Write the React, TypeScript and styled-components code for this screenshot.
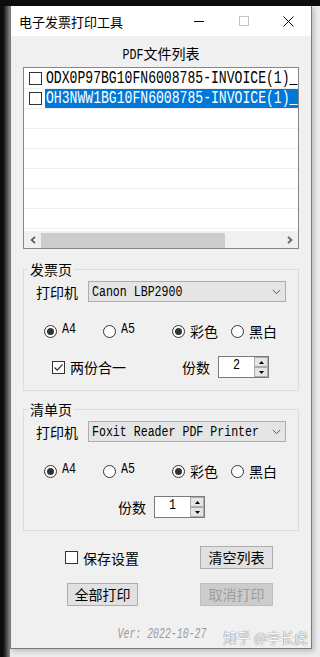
import React from "react";
import styled, { createGlobalStyle } from "styled-components";

const CJK = `"Noto Sans CJK SC", "Noto Sans", sans-serif`;

const GlobalStyle = createGlobalStyle`
  html, body { margin: 0; padding: 0; }
  body { background: #ececec; font-family: ${CJK}; color: #000; }
`;

const Screen = styled.div`
  width: 320px;
  height: 657px;
  box-sizing: border-box;
  padding: 6px 8px 8px 10px;
  background:
    linear-gradient(#0d0d0d, #0d0d0d) top left / 100% 6px no-repeat,
    linear-gradient(to right, #0d0d0d 0, #0d0d0d 3px, #3c3c3c 6px, #8c8c8c 10px) left top / 10px 100% no-repeat,
    #ececec;
`;

const Window = styled.div`
  position: relative;
  width: 302px;
  height: 643px;
  box-sizing: border-box;
  border: 1px solid #7a7a7a;
  border-top: none;
  display: flex;
  flex-direction: column;
  box-shadow: 2px 2px 5px rgba(0, 0, 0, 0.22);
  overflow: hidden;
`;

const TitleBar = styled.div`
  height: 30px;
  flex: none;
  background: #fff;
  display: flex;
  align-items: center;
`;

const Title = styled.div`
  flex: 1;
  padding-left: 8px;
  font-size: 13px;
  line-height: 16px;
  padding-top: 1px;
`;

const CaptionButton = styled.div`
  width: 45px;
  height: 30px;
  display: flex;
  align-items: center;
  justify-content: center;
`;

const Client = styled.div`
  flex: 1;
  background: #f0f0f0;
  padding: 9px 12px 0;
  display: flex;
  flex-direction: column;
`;

const Narrow = styled.span<{ $size: number; $sy: number; $italic?: boolean }>`
  display: inline-block;
  font-family: "Liberation Mono", monospace;
  font-size: ${(p) => p.$size}px;
  line-height: 1;
  font-style: ${(p) => (p.$italic ? "italic" : "normal")};
  transform: scaleY(${(p) => p.$sy});
  white-space: pre;
`;

const Header = styled.div`
  height: 16px;
  line-height: 16px;
  font-size: 14px;
  text-align: center;
`;

const ListBox = styled.div`
  margin-top: 6px;
  height: 182px;
  box-sizing: border-box;
  border: 1px solid #828790;
  background: #fff;
  display: flex;
  flex-direction: column;
  overflow: hidden;
`;

const Rows = styled.div`
  flex: 1;
  padding-top: 1px;
  overflow: hidden;
`;

const Row = styled.div`
  height: 20px;
  box-sizing: border-box;
  border-bottom: 1px solid #efefef;
  display: flex;
  align-items: center;
  padding-left: 5px;
  gap: 3px;
  white-space: nowrap;
`;

const ItemLabel = styled.div<{ $selected?: boolean }>`
  flex: 1;
  height: 19px;
  display: flex;
  align-items: center;
  padding-left: 1px;
  background: ${(p) => (p.$selected ? "#0078d7" : "transparent")};
  color: ${(p) => (p.$selected ? "#fff" : "#000")};
  overflow: hidden;
`;

const Box = styled.span`
  flex: none;
  width: 13px;
  height: 13px;
  box-sizing: border-box;
  border: 1px solid #333;
  background: #fff;
  display: inline-flex;
  align-items: center;
  justify-content: center;
`;

const HScroll = styled.div`
  height: 17px;
  flex: none;
  background: #f0f0f0;
  display: flex;
`;

const ScrollArrow = styled.div`
  width: 17px;
  display: flex;
  align-items: center;
  justify-content: center;
  padding-top: 1px;
`;

const ScrollTrack = styled.div`
  flex: 1;
  padding: 2px 0 0;
  display: flex;
`;

const Thumb = styled.div<{ $w: number }>`
  width: ${(p) => p.$w}px;
  background: #cdcdcd;
`;

const Group = styled.fieldset<{ $mt: number }>`
  margin: ${(p) => p.$mt}px 0 0;
  padding: 0 0 12px;
  border: 1px solid #dcdcdc;
  min-width: 0;
`;

const Legend = styled.legend`
  margin-left: 4px;
  padding: 0 2px;
  font-size: 14px;
  line-height: 16px;
`;

const PrinterRow = styled.div`
  margin-top: 4px;
  padding-left: 12px;
  display: flex;
  align-items: center;
  gap: 10px;
`;

const Label = styled.span`
  font-size: 14px;
  line-height: 16px;
  white-space: nowrap;
`;

const Select = styled.div`
  width: 198px;
  height: 21px;
  box-sizing: border-box;
  border: 1px solid #adadad;
  background: #e5e5e5;
  display: flex;
  align-items: center;
  padding: 0 4px 0 3px;
`;

const SelectText = styled.div`
  flex: 1;
  display: flex;
  align-items: center;
`;

const OptionRow = styled.div`
  margin-top: 21px;
  height: 16px;
  padding-left: 20px;
  display: grid;
  grid-template-columns: 59px 69px 59px auto;
  align-items: center;
`;

const Option = styled.div`
  display: flex;
  align-items: center;
  gap: 5px;
`;

const Radio = styled.span<{ $on?: boolean }>`
  width: 13px;
  height: 13px;
  box-sizing: border-box;
  border: 1px solid #333;
  border-radius: 50%;
  background: #fff;
  display: inline-flex;
  align-items: center;
  justify-content: center;
  &::after {
    content: "";
    width: 7px;
    height: 7px;
    border-radius: 50%;
    background: ${(p) => (p.$on ? "#333" : "transparent")};
  }
`;

const CountRow = styled.div<{ $pl: number; $cols: string }>`
  margin-top: 17px;
  padding-left: ${(p) => p.$pl}px;
  display: grid;
  grid-template-columns: ${(p) => p.$cols};
  align-items: center;
`;

const CountField = styled.div`
  display: flex;
  align-items: center;
  gap: 8px;
`;

const Spin = styled.div`
  width: 51px;
  height: 22px;
  box-sizing: border-box;
  border: 1px solid #7a7a7a;
  background: #fff;
  display: flex;
`;

const SpinValue = styled.div`
  flex: 1;
  display: flex;
  align-items: center;
  justify-content: center;
  padding-bottom: 1px;
`;

const SpinButtons = styled.div`
  width: 14px;
  display: flex;
  flex-direction: column;
`;

const SpinButton = styled.div`
  flex: 1;
  box-sizing: border-box;
  border: 1px solid #acacac;
  background: #e5e5e5;
  display: flex;
  align-items: center;
  justify-content: center;
`;

const Actions = styled.div`
  margin-top: 15px;
  padding-left: 42px;
  display: grid;
  grid-template-columns: 135px 73px;
  row-gap: 14px;
  align-items: center;
`;

const Button = styled.div<{ $w: number; $ml?: number; $disabled?: boolean }>`
  width: ${(p) => p.$w}px;
  margin-left: ${(p) => p.$ml ?? 0}px;
  height: 23px;
  box-sizing: border-box;
  border: 1px solid ${(p) => (p.$disabled ? "#bfbfbf" : "#adadad")};
  background: ${(p) => (p.$disabled ? "#cccccc" : "#e1e1e1")};
  color: ${(p) => (p.$disabled ? "#9d9d9d" : "#000")};
  font-size: 14px;
  line-height: 21px;
  text-align: center;
`;

const Version = styled.div`
  margin-top: 16px;
  height: 16px;
  line-height: 16px;
  text-align: center;
  color: #9a9a9a;
  padding-left: 2px;
`;

const Watermark = styled.div`
  position: absolute;
  right: 3px;
  bottom: 3px;
  font-size: 13.5px;
  line-height: 16px;
  color: #fbfbfb;
  letter-spacing: 0.2px;
  text-shadow: 0 0 1px rgba(0, 0, 0, 0.55), 0 0 1px rgba(0, 0, 0, 0.35);
`;

const Check = () => (
  <svg width="11" height="11" viewBox="0 0 11 11">
    <path d="M1.5 5.5 L4.2 8.2 L9.5 2.5" fill="none" stroke="#333" strokeWidth="1.2" />
  </svg>
);

const Chevron = () => (
  <svg width="9" height="6" viewBox="0 0 9 6">
    <path d="M0.8 1 L4.5 4.6 L8.2 1" fill="none" stroke="#555" strokeWidth="1" />
  </svg>
);

const Tri = ({ up }: { up?: boolean }) => (
  <svg width="5" height="3" viewBox="0 0 5 3">
    <path d={up ? "M0 3 L2.5 0 L5 3 Z" : "M0 0 L5 0 L2.5 3 Z"} fill="#000" />
  </svg>
);

const Mono = ({ children, italic }: { children: string; italic?: boolean }) => (
  <Narrow $size={11.67} $sy={1.18} $italic={italic}>
    {children}
  </Narrow>
);

const files = [
  { name: "ODX0P97BG10FN6008785-INVOICE(1)_", selected: false },
  { name: "OH3NWW1BG10FN6008785-INVOICE(1)_", selected: true },
];

const SpinBox = ({ value }: { value: string }) => (
  <Spin>
    <SpinValue>
      <Mono>{value}</Mono>
    </SpinValue>
    <SpinButtons>
      <SpinButton>
        <Tri up />
      </SpinButton>
      <SpinButton>
        <Tri />
      </SpinButton>
    </SpinButtons>
  </Spin>
);

const PrinterGroup = ({
  title,
  printer,
  mt,
  merge,
  count,
}: {
  title: string;
  printer: string;
  mt: number;
  merge: boolean;
  count: string;
}) => (
  <Group $mt={mt}>
    <Legend>{title}</Legend>
    <PrinterRow>
      <Label>打印机</Label>
      <Select>
        <SelectText>
          <Narrow $size={11.6} $sy={1.22}>
            {printer}
          </Narrow>
        </SelectText>
        <Chevron />
      </Select>
    </PrinterRow>
    <OptionRow>
      <Option>
        <Radio $on />
        <Mono>A4</Mono>
      </Option>
      <Option>
        <Radio />
        <Mono>A5</Mono>
      </Option>
      <Option>
        <Radio $on />
        <Label>彩色</Label>
      </Option>
      <Option>
        <Radio />
        <Label>黑白</Label>
      </Option>
    </OptionRow>
    {merge ? (
      <CountRow $pl={28} $cols="130px auto">
        <Option>
          <Box>
            <Check />
          </Box>
          <Label>两份合一</Label>
        </Option>
        <CountField>
          <Label>份数</Label>
          <SpinBox value={count} />
        </CountField>
      </CountRow>
    ) : (
      <CountRow $pl={94} $cols="auto">
        <CountField>
          <Label>份数</Label>
          <SpinBox value={count} />
        </CountField>
      </CountRow>
    )}
  </Group>
);

export default function App() {
  const rows = [...files, ...Array.from({ length: 6 }, () => null)];
  return (
    <>
      <GlobalStyle />
      <Screen>
        <Window>
          <TitleBar>
            <Title>电子发票打印工具</Title>
            <CaptionButton>
              <svg width="10" height="10" viewBox="0 0 10 10">
                <line x1="0" y1="5.5" x2="10" y2="5.5" stroke="#000" strokeWidth="1" />
              </svg>
            </CaptionButton>
            <CaptionButton>
              <svg width="10" height="10" viewBox="0 0 10 10">
                <rect x="0.5" y="0.5" width="9" height="9" fill="none" stroke="#c4c4c4" strokeWidth="1" />
              </svg>
            </CaptionButton>
            <CaptionButton>
              <svg width="11" height="11" viewBox="0 0 11 11">
                <path d="M0.5 0.5 L10.5 10.5 M10.5 0.5 L0.5 10.5" stroke="#000" strokeWidth="1" />
              </svg>
            </CaptionButton>
          </TitleBar>
          <Client>
            <Header>
              <Mono>PDF</Mono>文件列表
            </Header>
            <ListBox>
              <Rows>
                {rows.map((f, i) => (
                  <Row key={i}>
                    {f && (
                      <>
                        <Box />
                        <ItemLabel $selected={f.selected}>
                          <Narrow $size={13.1} $sy={1.38}>
                            {f.name}
                          </Narrow>
                        </ItemLabel>
                      </>
                    )}
                  </Row>
                ))}
              </Rows>
              <HScroll>
                <ScrollArrow>
                  <svg width="6" height="8" viewBox="0 0 6 8">
                    <path d="M5 0.8 L1.6 4 L5 7.2" fill="none" stroke="#606060" strokeWidth="1.8" />
                  </svg>
                </ScrollArrow>
                <ScrollTrack>
                  <Thumb $w={184} />
                </ScrollTrack>
                <ScrollArrow>
                  <svg width="6" height="8" viewBox="0 0 6 8">
                    <path d="M1 0.8 L4.4 4 L1 7.2" fill="none" stroke="#606060" strokeWidth="1.8" />
                  </svg>
                </ScrollArrow>
              </HScroll>
            </ListBox>
            <PrinterGroup title="发票页" printer="Canon LBP2900" mt={12} merge count="2" />
            <PrinterGroup title="清单页" printer="Foxit Reader PDF Printer" mt={10} merge={false} count="1" />
            <Actions>
              <Option>
                <Box />
                <Label>保存设置</Label>
              </Option>
              <Button $w={73}>清空列表</Button>
              <Button $w={71} $ml={2}>
                全部打印
              </Button>
              <Button $w={73} $disabled>
                取消打印
              </Button>
            </Actions>
            <Version>
              <Narrow $size={9.9} $sy={1.4} $italic>
                Ver: 2022-10-27
              </Narrow>
            </Version>
          </Client>
          <Watermark>知乎 @李长虎</Watermark>
        </Window>
      </Screen>
    </>
  );
}
